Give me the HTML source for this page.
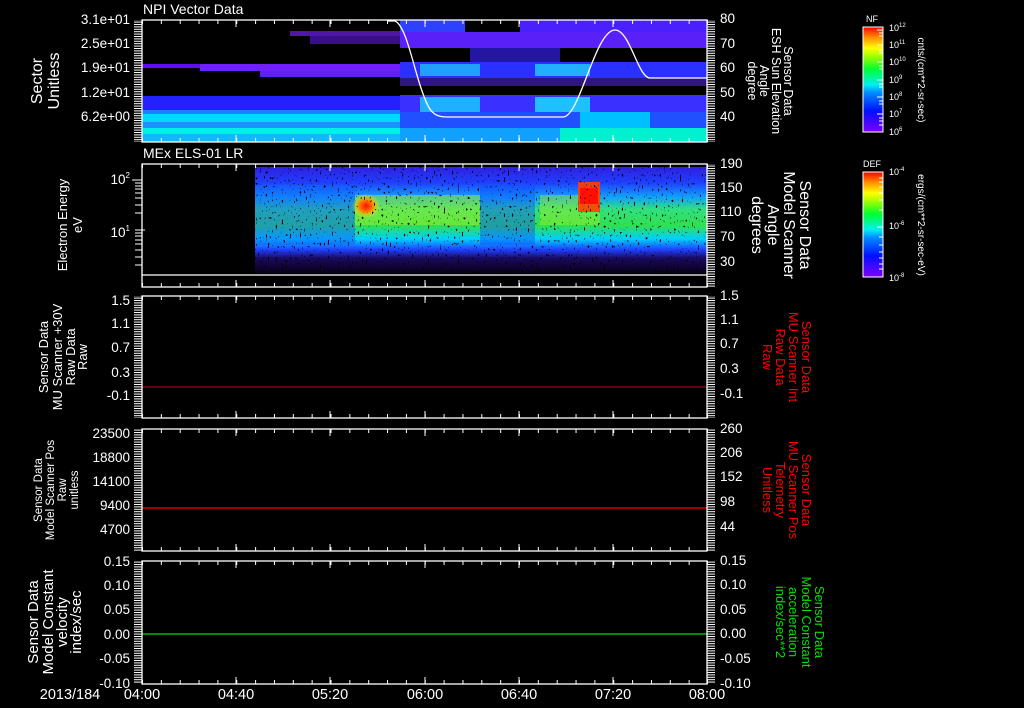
<!DOCTYPE html>
<html><head><meta charset="utf-8"><style>
html,body{margin:0;padding:0;background:#000;}
svg{display:block;font-family:"Liberation Sans",sans-serif;}
text{fill:#fff;}
</style></head><body>
<svg width="1024" height="708" viewBox="0 0 1024 708" xmlns="http://www.w3.org/2000/svg">
<defs>
<linearGradient id="cb" x1="0" y1="1" x2="0" y2="0">
<stop offset="0" stop-color="#8000ff"/><stop offset="0.2" stop-color="#0010ff"/><stop offset="0.38" stop-color="#0090ff"/><stop offset="0.45" stop-color="#00f0f0"/><stop offset="0.6" stop-color="#00ff30"/><stop offset="0.72" stop-color="#a0ff00"/><stop offset="0.8" stop-color="#ffff00"/><stop offset="0.9" stop-color="#ff9000"/><stop offset="1" stop-color="#ff0000"/>
</linearGradient>
<linearGradient id="p2v" x1="0" y1="0" x2="0" y2="1">
<stop offset="0" stop-color="#3020e0"/><stop offset="0.15" stop-color="#2040ff"/><stop offset="0.28" stop-color="#10a0ff"/><stop offset="0.4" stop-color="#30e080"/><stop offset="0.55" stop-color="#30e050"/><stop offset="0.68" stop-color="#00d0ff"/><stop offset="0.78" stop-color="#2040ff"/><stop offset="0.86" stop-color="#1a0a60"/><stop offset="1" stop-color="#080018"/>
</linearGradient>
<radialGradient id="hot"><stop offset="0" stop-color="#ff1000"/><stop offset="0.5" stop-color="#ff8000"/><stop offset="1" stop-color="#ffff00" stop-opacity="0"/></radialGradient>
<filter id="spk" x="0" y="0" width="100%" height="100%">
<feTurbulence type="fractalNoise" baseFrequency="0.5 0.35" numOctaves="1" seed="3"/>
<feColorMatrix type="matrix" values="0 0 0 0 0  0 0 0 0 0  0 0 0 0 0  -12 0 0 0 4.2"/>
</filter>
<pattern id="comb" width="8" height="2.4" patternUnits="userSpaceOnUse"><rect x="0" y="0" width="8" height="1" fill="#fff"/></pattern>
<pattern id="tt" x="142" width="18.85" height="10" patternUnits="userSpaceOnUse"><rect x="0" y="0" width="1" height="10" fill="#fff"/></pattern>
</defs>

<!-- PANEL 1 data -->
<g>
<rect x="142" y="96" width="565" height="14" fill="#2222ff"/>
<rect x="142" y="110" width="565" height="4" fill="#1e80ff"/>
<rect x="142" y="114" width="565" height="8" fill="#00d8ff"/>
<rect x="142" y="122" width="565" height="6" fill="#2090ff"/>
<rect x="142" y="128" width="565" height="6" fill="#00f0e8"/>
<rect x="142" y="134" width="565" height="8" fill="#10b8ff"/>
<rect x="200" y="64" width="200" height="7" fill="#7020ff"/>
<rect x="142" y="64" width="58" height="4" fill="#6010f0"/>
<rect x="260" y="71" width="140" height="6" fill="#6020f0"/>
<rect x="290" y="31" width="110" height="5" fill="#7020f0" opacity="0.7"/>
<rect x="310" y="36" width="90" height="8" fill="#6018e0" opacity="0.6"/>
<rect x="400" y="20" width="65" height="12" fill="#3040ff"/>
<rect x="520" y="20" width="187" height="12" fill="#4a20ff"/>
<rect x="400" y="32" width="307" height="16" fill="#5a20f8"/>
<rect x="470" y="48" width="90" height="14" fill="#3020e8" opacity="0.7"/>
<rect x="400" y="62" width="307" height="16" fill="#2a30ff"/>
<rect x="420" y="64" width="60" height="12" fill="#20a0ff"/>
<rect x="535" y="64" width="55" height="12" fill="#20b0ff"/>
<rect x="400" y="78" width="307" height="8" fill="#5020e0" opacity="0.6"/>
<rect x="400" y="95" width="307" height="17" fill="#3a30ff"/>
<rect x="420" y="97" width="60" height="15" fill="#20b0ff"/>
<rect x="535" y="97" width="55" height="15" fill="#20c0ff"/>
<rect x="400" y="112" width="307" height="16" fill="#2050ff"/>
<rect x="580" y="112" width="70" height="16" fill="#00c0ff"/>
<rect x="400" y="128" width="307" height="14" fill="#10a0ff"/>
<rect x="560" y="128" width="147" height="14" fill="#00f0d0"/>
<path d="M387,21 L395,21 C405,25 412,60 420,85 C428,110 432,117 447,117 L563,117 C580,117 595,30 615,30 C630,30 638,78 650,78 L707,78" fill="none" stroke="#fff" stroke-width="1.3"/>
</g>

<!-- PANEL 2 data -->
<rect x="255" y="167" width="452" height="106" fill="url(#p2v)"/>
<rect x="255" y="185" width="100" height="60" fill="#1060ff" opacity="0.5"/>
<rect x="480" y="185" width="55" height="60" fill="#1050ff" opacity="0.45"/>
<rect x="355" y="195" width="125" height="30" fill="#a0f020" opacity="0.5"/>
<rect x="540" y="195" width="60" height="30" fill="#a0f020" opacity="0.45"/>
<ellipse cx="366" cy="206" rx="14" ry="12" fill="url(#hot)"/>
<rect x="578" y="182" width="22" height="30" fill="#ff4000" opacity="0.9"/>
<rect x="580" y="188" width="18" height="16" fill="#ff1000"/>
<rect x="255" y="167" width="452" height="106" filter="url(#spk)"/>
<line x1="142" y1="275" x2="707" y2="275" stroke="#fff" stroke-width="1.3"/>

<line x1="142" y1="387" x2="707" y2="387" stroke="#c01010" stroke-width="1"/>
<line x1="142" y1="508" x2="707" y2="508" stroke="#ff0000" stroke-width="1.3"/>
<line x1="142" y1="634" x2="707" y2="634" stroke="#00e000" stroke-width="1.3"/>

<g fill="none" stroke="#fff" stroke-width="1.3">
<rect x="142" y="20" width="565" height="122"/>
<rect x="142" y="164" width="565" height="123"/>
<rect x="142" y="296" width="565" height="122"/>
<rect x="142" y="429" width="565" height="122"/>
<rect x="142" y="561" width="565" height="123"/>
</g>
<g fill="url(#tt)">
<rect x="142" y="20" width="566" height="4"/><rect x="142" y="138" width="566" height="4"/>
<rect x="142" y="164" width="566" height="4"/><rect x="142" y="283" width="566" height="4"/>
<rect x="142" y="296" width="566" height="4"/><rect x="142" y="414" width="566" height="4"/>
<rect x="142" y="429" width="566" height="4"/><rect x="142" y="547" width="566" height="4"/>
<rect x="142" y="561" width="566" height="4"/><rect x="142" y="680" width="566" height="4"/>
</g>
<g stroke="#fff" stroke-width="1">
<path d="M236,20v7M330,20v7M425,20v7M519,20v7M613,20v7M236,142v-7M330,142v-7M425,142v-7M519,142v-7M613,142v-7"/>
<path d="M236,164v7M330,164v7M425,164v7M519,164v7M613,164v7M236,287v-7M330,287v-7M425,287v-7M519,287v-7M613,287v-7"/>
<path d="M236,296v7M330,296v7M425,296v7M519,296v7M613,296v7M236,418v-7M330,418v-7M425,418v-7M519,418v-7M613,418v-7"/>
<path d="M236,429v7M330,429v7M425,429v7M519,429v7M613,429v7M236,551v-7M330,551v-7M425,551v-7M519,551v-7M613,551v-7"/>
<path d="M236,561v7M330,561v7M425,561v7M519,561v7M613,561v7M236,684v-7M330,684v-7M425,684v-7M519,684v-7M613,684v-7"/>
</g>
<g fill="url(#comb)">
<rect x="134" y="20" width="8" height="122"/><rect x="707" y="20" width="8" height="122"/>
<rect x="707" y="164" width="8" height="123"/>
<rect x="134" y="296" width="8" height="122"/><rect x="707" y="296" width="8" height="122"/>
<rect x="134" y="429" width="8" height="122"/><rect x="707" y="429" width="8" height="122"/>
<rect x="134" y="561" width="8" height="123"/><rect x="707" y="561" width="8" height="123"/>
</g>
<g stroke="#fff"><path d="M132,180h10M135,183h7M135,186h7M135,189h7M135,193h7M135,198h7M135,205h7M135,213h7M135,230h10M135,233h7M135,236h7M135,240h7M135,244h7M135,250h7M135,257h7M135,265h7"/></g>

<g font-size="14">
<text x="143" y="14">NPI Vector Data</text>
<text x="143" y="158">MEx ELS-01 LR</text>
</g>
<g font-size="13.5" text-anchor="end">
<text x="130" y="24">3.1e+01</text><text x="130" y="48">2.5e+01</text><text x="130" y="72">1.9e+01</text><text x="130" y="97">1.2e+01</text><text x="130" y="121">6.2e+00</text>
<text x="130" y="305">1.5</text><text x="130" y="328">1.1</text><text x="130" y="352">0.7</text><text x="130" y="377">0.3</text><text x="130" y="400">-0.1</text>
<text x="130" y="438">23500</text><text x="130" y="462">18800</text><text x="130" y="486">14100</text><text x="130" y="510">9400</text><text x="130" y="534">4700</text>
<text x="130" y="566">0.15</text><text x="130" y="590">0.10</text><text x="130" y="614">0.05</text><text x="130" y="639">0.00</text><text x="130" y="663">-0.05</text><text x="130" y="688">-0.10</text>
<text x="130" y="184">10<tspan font-size="8" dy="-6">2</tspan></text>
<text x="130" y="237">10<tspan font-size="8" dy="-6">1</tspan></text>
</g>
<g font-size="13.5">
<text x="720" y="23">80</text><text x="720" y="48">70</text><text x="720" y="72">60</text><text x="720" y="97">50</text><text x="720" y="121">40</text>
<text x="720" y="168">190</text><text x="720" y="192">150</text><text x="720" y="216">110</text><text x="720" y="241">70</text><text x="720" y="266">30</text>
<text x="720" y="300">1.5</text><text x="720" y="324">1.1</text><text x="720" y="348">0.7</text><text x="720" y="373">0.3</text><text x="720" y="398">-0.1</text>
<text x="720" y="433">260</text><text x="720" y="457">206</text><text x="720" y="481">152</text><text x="720" y="506">98</text><text x="720" y="531">44</text>
<text x="720" y="565">0.15</text><text x="720" y="589">0.10</text><text x="720" y="614">0.05</text><text x="720" y="638">0.00</text><text x="720" y="663">-0.05</text><text x="720" y="688">-0.10</text>
</g>
<g font-size="14.5" text-anchor="middle">
<text x="70" y="699">2013/184</text>
<text x="142" y="699">04:00</text><text x="236" y="699">04:40</text><text x="330" y="699">05:20</text><text x="425" y="699">06:00</text><text x="519" y="699">06:40</text><text x="613" y="699">07:20</text><text x="707" y="699">08:00</text>
</g>
<g text-anchor="middle">
<text font-size="16" transform="translate(42,81) rotate(-90)">Sector</text>
<text font-size="16" transform="translate(59,81) rotate(-90)">Unitless</text>
<text font-size="13" transform="translate(67,225) rotate(-90)">Electron Energy</text>
<text font-size="13" transform="translate(82,225) rotate(-90)">eV</text>
<text font-size="13" transform="translate(48,357) rotate(-90)">Sensor Data</text>
<text font-size="13" transform="translate(62,357) rotate(-90)">MU Scanner +30V</text>
<text font-size="13" transform="translate(75,357) rotate(-90)">Raw Data</text>
<text font-size="13" transform="translate(87,357) rotate(-90)">Raw</text>
<text font-size="11.5" transform="translate(42,490) rotate(-90)">Sensor Data</text>
<text font-size="11.5" transform="translate(54,490) rotate(-90)">Model Scanner Pos</text>
<text font-size="11.5" transform="translate(66,490) rotate(-90)">Raw</text>
<text font-size="11.5" transform="translate(78,490) rotate(-90)">unitless</text>
<text font-size="15" transform="translate(38,622) rotate(-90)">Sensor Data</text>
<text font-size="15" transform="translate(53,622) rotate(-90)">Model Constant</text>
<text font-size="15" transform="translate(67,622) rotate(-90)">velocity</text>
<text font-size="15" transform="translate(81,622) rotate(-90)">index/sec</text>
</g>
<g text-anchor="middle">
<text font-size="12.5" transform="translate(784,81) rotate(90)">Sensor Data</text>
<text font-size="12.5" transform="translate(772,81) rotate(90)">ESH Sun Elevation</text>
<text font-size="12.5" transform="translate(760,81) rotate(90)">Angle</text>
<text font-size="12.5" transform="translate(748,81) rotate(90)">degree</text>
<text font-size="16" transform="translate(800,225) rotate(90)">Sensor Data</text>
<text font-size="16" transform="translate(784,225) rotate(90)">Model Scanner</text>
<text font-size="16" transform="translate(768,225) rotate(90)">Angle</text>
<text font-size="16" transform="translate(752,225) rotate(90)">degrees</text>
<text style="fill:#f00" font-size="13" transform="translate(802,357) rotate(90)">Sensor Data</text>
<text style="fill:#f00" font-size="13" transform="translate(789,357) rotate(90)">MU Scanner Int</text>
<text style="fill:#f00" font-size="13" transform="translate(776,357) rotate(90)">Raw Data</text>
<text style="fill:#f00" font-size="13" transform="translate(763,357) rotate(90)">Raw</text>
<text style="fill:#f00" font-size="13" transform="translate(802,490) rotate(90)">Sensor Data</text>
<text style="fill:#f00" font-size="13" transform="translate(789,490) rotate(90)">MU Scanner Pos</text>
<text style="fill:#f00" font-size="13" transform="translate(776,490) rotate(90)">Telemetry</text>
<text style="fill:#f00" font-size="13" transform="translate(763,490) rotate(90)">Unitless</text>
<text style="fill:#00e000" font-size="13" transform="translate(815,622) rotate(90)">Sensor Data</text>
<text style="fill:#00e000" font-size="13" transform="translate(802,622) rotate(90)">Model Constant</text>
<text style="fill:#00e000" font-size="13" transform="translate(789,622) rotate(90)">acceleration</text>
<text style="fill:#00e000" font-size="13" transform="translate(776,622) rotate(90)">index/sec**2</text>
</g>

<rect x="863" y="27" width="20" height="105" fill="url(#cb)" stroke="#fff" stroke-width="1"/>
<rect x="863" y="172" width="20" height="105" fill="url(#cb)" stroke="#fff" stroke-width="1"/>
<g stroke="#fff" stroke-width="1"><path d="M877,30h6M879,33h4M879,36h4M877,45h6M879,50h4M879,53h4M877,62h6M879,66h4M879,69h4M877,80h6M879,84h4M879,87h4M877,97h6M879,101h4M879,104h4M877,114h6M879,118h4M879,121h4M879,125h4"/>
<path d="M877,227h6M879,237h4M879,245h4M879,252h4M879,258h4M879,264h4M879,269h4M879,210h4M879,200h4M879,193h4M879,187h4M879,182h4M879,178h4"/></g>
<g font-size="9"><text x="866" y="22">NF</text><text x="863" y="167">DEF</text></g>
<g font-size="9">
<text x="889" y="31">10<tspan font-size="6" dy="-4">12</tspan></text>
<text x="889" y="48">10<tspan font-size="6" dy="-4">11</tspan></text>
<text x="889" y="65">10<tspan font-size="6" dy="-4">10</tspan></text>
<text x="889" y="83">10<tspan font-size="6" dy="-4">9</tspan></text>
<text x="889" y="100">10<tspan font-size="6" dy="-4">8</tspan></text>
<text x="889" y="117">10<tspan font-size="6" dy="-4">7</tspan></text>
<text x="889" y="135">10<tspan font-size="6" dy="-4">6</tspan></text>
<text x="889" y="175">10<tspan font-size="6" dy="-4">-4</tspan></text>
<text x="889" y="229">10<tspan font-size="6" dy="-4">-6</tspan></text>
<text x="889" y="281">10<tspan font-size="6" dy="-4">-8</tspan></text>
</g>
<text font-size="10" text-anchor="middle" transform="translate(918,80) rotate(90)">cnts/(cm**2-sr-sec)</text>
<text font-size="10" text-anchor="middle" transform="translate(918,225) rotate(90)">ergs/(cm**2-sr-sec-eV)</text>
</svg>
</body></html>
